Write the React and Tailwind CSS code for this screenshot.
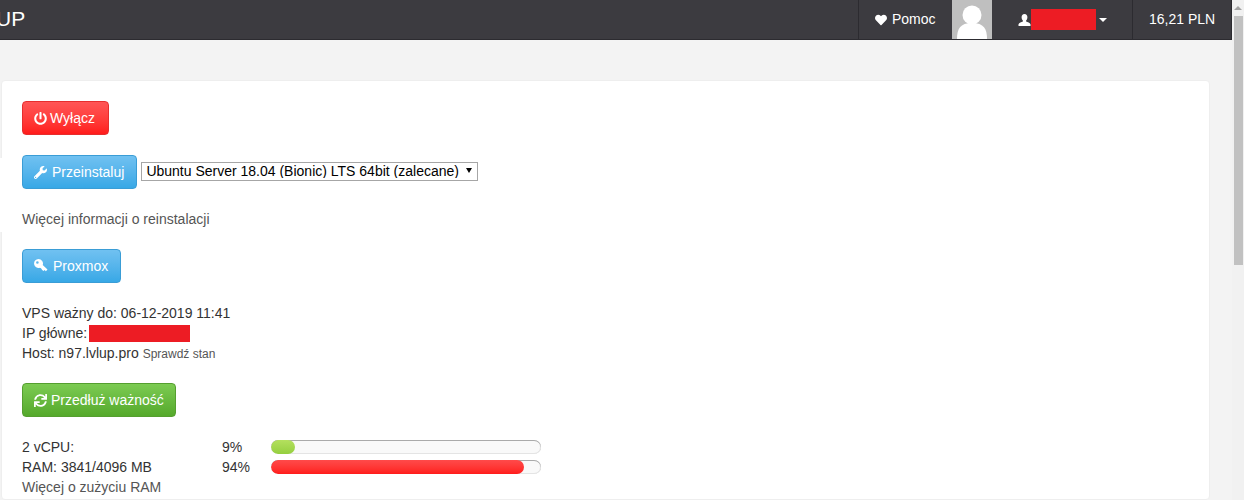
import { FaPowerOff, FaWrench, FaSync, FaHeart } from "react-icons/fa";

function Btn({ color, icon, pad = "pr-3", children }) {
  const colors = {
    red: "bg-gradient-to-b from-[#ff5555] to-[#ff1a1a] border-[#e62e2e]",
    blue: "bg-gradient-to-b from-[#70c1f1] to-[#37a8e6] border-[#3a9dd6]",
    green: "bg-gradient-to-b from-[#7ccb52] to-[#55a92b] border-[#559f2f]",
  };
  return (
    <button type="button" className={`h-[34px] pl-[11px] flex items-center rounded-[4px] border text-white text-[14px] whitespace-nowrap ${pad} ${colors[color]}`}>
      {icon}
      {children}
    </button>
  );
}

function Usage({ label, percent, bar, fill }) {
  return (
    <div className="flex items-center h-5">
      <div className="w-[200px]">{label}</div>
      <div className="w-[49px]">{percent}%</div>
      <div className="w-[270px] h-[14px] rounded-full bg-[#f9f9f9] shadow-[inset_0_1px_0_#aaaaaa,inset_0_-1px_0_#e4e4e4,inset_1px_0_0_#e4e4e4,inset_-1px_0_0_#e4e4e4] overflow-hidden">
        <div className={`h-full rounded-full ${fill} ${bar}`} />
      </div>
    </div>
  );
}

export default function App() {
  return (
    <div className="flex h-[500px] w-[1244px] overflow-hidden bg-[#f3f3f3] font-['Liberation_Sans',sans-serif] text-[14px] text-[#333333]">
      <div className="w-[1232px] flex flex-col relative">
        <header className="h-10 shrink-0 bg-[#3c3b40] text-white flex items-stretch border-b border-r border-[#2c2b30]">
          <div className="flex-1 text-[21px] leading-[38px] -ml-[4px] overflow-hidden">UP</div>
          <div className="w-[94px] border-l border-[#2c2b30] flex items-center gap-[5px] pl-4">
            <FaHeart className="w-3 h-3" />
            Pomoc
          </div>
          <div className="w-10 bg-[#bfbfbf] overflow-hidden">
            <svg viewBox="0 0 40 39" className="w-10 h-[39px]" fill="#ffffff">
              <circle cx="20" cy="15" r="9.5" />
              <path d="M5 39c0-10 3-16 15-16s15 6 15 16z" />
            </svg>
          </div>
          <div className="w-[140px] flex items-center pl-[26px]">
            <svg viewBox="0 0 13 12" className="w-[13px] h-3" fill="#ffffff">
              <path d="M6.5 0C4.6 0 3.6 1.4 3.6 3.2c0 1.5.6 2.7 1.3 3.4v1C3.4 8.3 1 9 .5 10.2V12h12v-1.8C12 9 9.6 8.3 8.100 7.600v-1c.7-.7 1.300-1.900 1.300-3.400C9.400 1.400 8.400 0 6.500 0z" />
            </svg>
            <div className="w-[65px] h-[21px] bg-[#ed1c24]" />
            <div className="ml-[3px] w-0 h-0 border-x-4 border-x-transparent border-t-4 border-t-white" />
          </div>
          <div className="w-[99px] border-l border-[#2c2b30] flex items-center pl-4">16,21 PLN</div>
        </header>

        <main className="ml-[1px] mr-[22px] mt-[40px] bg-white rounded-[4px] border border-[#eeeeee] px-5 pt-5 flex-1 flex flex-col items-start">
          <Btn color="red" pad="pr-[13px]" icon={<FaPowerOff className="w-[13px] h-[13px] mr-[3px]" />}>Wyłącz</Btn>
          <div className="flex items-center gap-1 mt-5">
            <Btn color="blue" icon={<FaWrench className="w-[13px] h-[13px] mr-[5px]" />}>Przeinstaluj</Btn>
            <div className="relative -mt-[2px]">
              <select className="block w-[337px] h-[19px] appearance-none bg-white border border-[#a6a6a6] text-[14px] text-black leading-none pl-1">
                <option>Ubuntu Server 18.04 (Bionic) LTS 64bit (zalecane)</option>
              </select>
              <div className="absolute right-[6px] top-[6px] w-0 h-0 border-x-[3.5px] border-x-transparent border-t-[5px] border-t-black" />
            </div>
          </div>
          <a className="mt-5 leading-5 text-[#555555]">Więcej informacji o reinstalacji</a>
          <div className="mt-5">
            <Btn
              color="blue"
              icon={
                <svg viewBox="0 0 14 14" className="w-[14px] h-[14px] mr-[5px]" fill="#ffffff">
                  <path fillRule="evenodd" d="M4.500 0a4.500 4.500 0 0 1 4.200 6.100L13.500 10.500l-1.600 1.700-1.300-1.200-1.100 1.100-1.300-1.200L7 9.300 5.900 8.800A4.500 4.500 0 1 1 4.500 0zM3.400 2.200a1.300 1.300 0 1 0 0 2.600 1.300 1.300 0 0 0 0-2.600z" />
                </svg>
              }
            >
              Proxmox
            </Btn>
          </div>
          <div className="mt-5 leading-5">
            <div>VPS ważny do: 06-12-2019 11:41</div>
            <div className="flex items-center gap-[2px]">
              IP główne:
              <span className="w-[101px] h-[17px] bg-[#ed1c24]" />
            </div>
            <div>
              Host: n97.lvlup.pro <span className="text-[12px] text-[#555555]">Sprawdź stan</span>
            </div>
          </div>
          <div className="mt-[19px]">
            <Btn color="green" pad="pr-[11px]" icon={<FaSync className="w-[13px] h-[13px] mr-[4px]" />}>Przedłuż ważność</Btn>
          </div>
          <div className="mt-5">
            <Usage label="2 vCPU:" percent={9} bar="w-[24px]" fill="bg-gradient-to-b from-[#b4e05e] to-[#95cf3f]" />
            <Usage label="RAM: 3841/4096 MB" percent={94} bar="w-[253px]" fill="bg-gradient-to-b from-[#ff4a4a] to-[#ff1a1a]" />
            <div className="leading-5 text-[#555555]">Więcej o zużyciu RAM</div>
          </div>
        </main>
        <div className="absolute left-0 top-[158px] w-[2px] h-[74px] bg-white" />
      </div>

      <div className="w-3 shrink-0 bg-[#f1f1f1] flex flex-col items-center">
        <div className="h-4 flex items-center justify-center">
          <div className="w-0 h-0 border-x-4 border-x-transparent border-b-4 border-b-[#a3a3a3]" />
        </div>
        <div className="w-[9px] ml-[1px] h-[249px] bg-[#c1c1c1]" />
      </div>
    </div>
  );
}
